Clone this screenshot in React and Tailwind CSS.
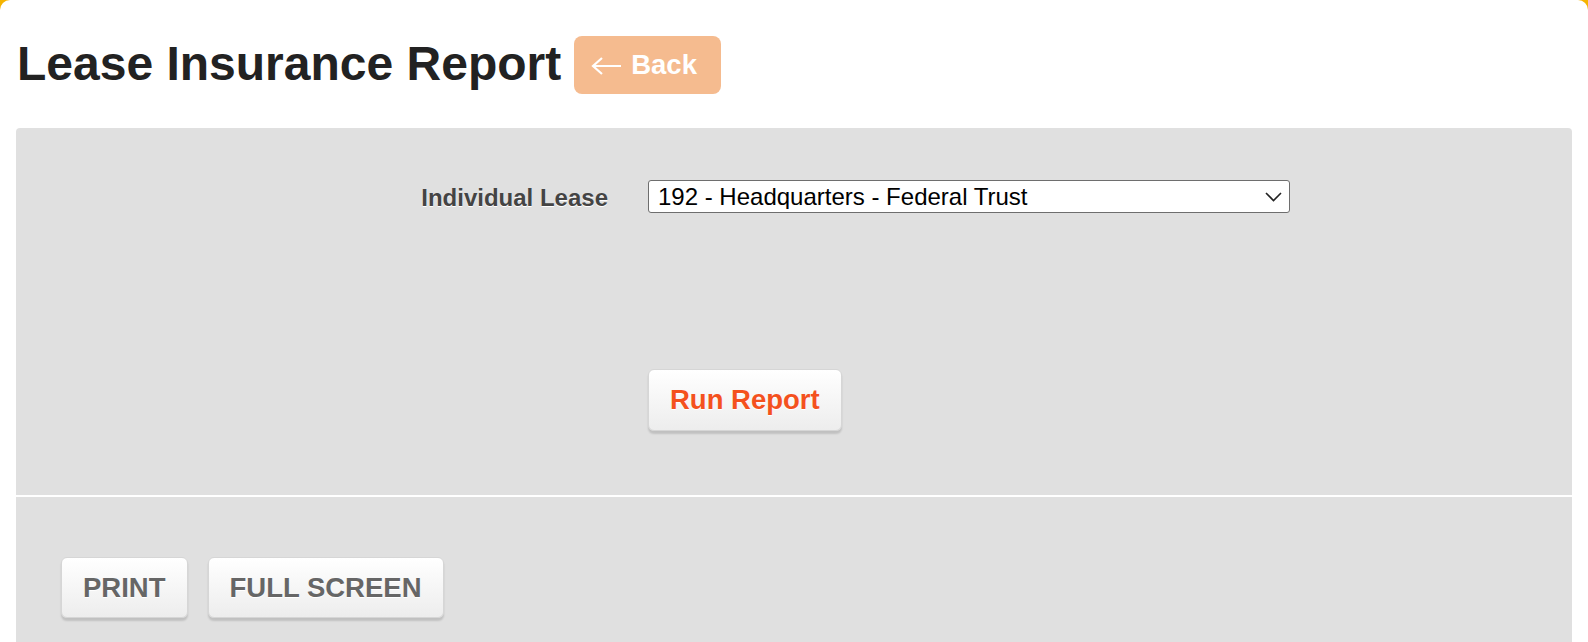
import { useState } from 'react'

function GrayButton({ children, className = '' }) {
  return (
    <button
      type="button"
      className={`flex items-center justify-center rounded-[6px] border border-[#d6d6d6] bg-gradient-to-b from-white to-[#ededed] px-[21px] font-bold shadow-[0_3px_2px_rgba(0,0,0,0.14)] [text-shadow:0_1px_0_#fff] ${className}`}
    >
      {children}
    </button>
  )
}

export default function App() {
  const [lease, setLease] = useState('192')

  return (
    <div className="min-h-screen bg-[#f5b400] font-['Liberation_Sans',Arial,sans-serif]">
      <div className="min-h-screen rounded-t-[10px] bg-white">
        <div className="flex items-start px-[17px] pt-[36px]">
          <h1 className="text-[48px] font-bold leading-[55px] text-[#222]">Lease Insurance Report</h1>
          <button
            type="button"
            className="ml-[13px] flex h-[58px] w-[147px] items-center gap-[10px] rounded-[8px] bg-[#f5bb8f] pl-[17px] text-[27.5px] font-bold text-white"
          >
            <svg width="30" height="20" viewBox="0 0 30 20" fill="none" className="mt-[2px]">
              <path d="M2 10h28M11 2L2 10l9 8" stroke="#fff" strokeWidth="2.2" />
            </svg>
            Back
          </button>
        </div>

        <div className="mx-[16px] mt-[34px] rounded-t-[4px] bg-[#e0e0e0]">
          <div className="grid grid-cols-[592px_642px] gap-x-[40px] gap-y-[153px] border-b-2 border-white pt-[52px] pb-[64px]">
            <label className="flex items-center justify-end text-[24px] font-bold text-[#444] [text-shadow:0_1px_0_#fff]">
              Individual Lease
            </label>
            <div className="relative">
              <select
                value={lease}
                onChange={(e) => setLease(e.target.value)}
                className="h-[33px] w-full appearance-none rounded-[3px] border border-[#6e6e6e] bg-white pl-[9px] text-[24px] leading-none text-black"
              >
                <option value="192">192 - Headquarters - Federal Trust</option>
              </select>
              <svg
                className="pointer-events-none absolute right-[8px] top-[12px]"
                width="17"
                height="10"
                viewBox="0 0 17 10"
                fill="none"
              >
                <path d="M1 1l7.5 7.5L16 1" stroke="#222" strokeWidth="1.6" />
              </svg>
            </div>
            <div />
            <div>
              <GrayButton className="h-[62px] text-[27.5px] text-[#f4511e]">Run Report</GrayButton>
            </div>
          </div>

          <div className="flex gap-[20px] px-[45px] pt-[60px] pb-[40px]">
            <GrayButton className="h-[61px] text-[27.5px] text-[#666]">PRINT</GrayButton>
            <GrayButton className="h-[61px] text-[27.5px] text-[#666]">FULL SCREEN</GrayButton>
          </div>
        </div>
      </div>
    </div>
  )
}
